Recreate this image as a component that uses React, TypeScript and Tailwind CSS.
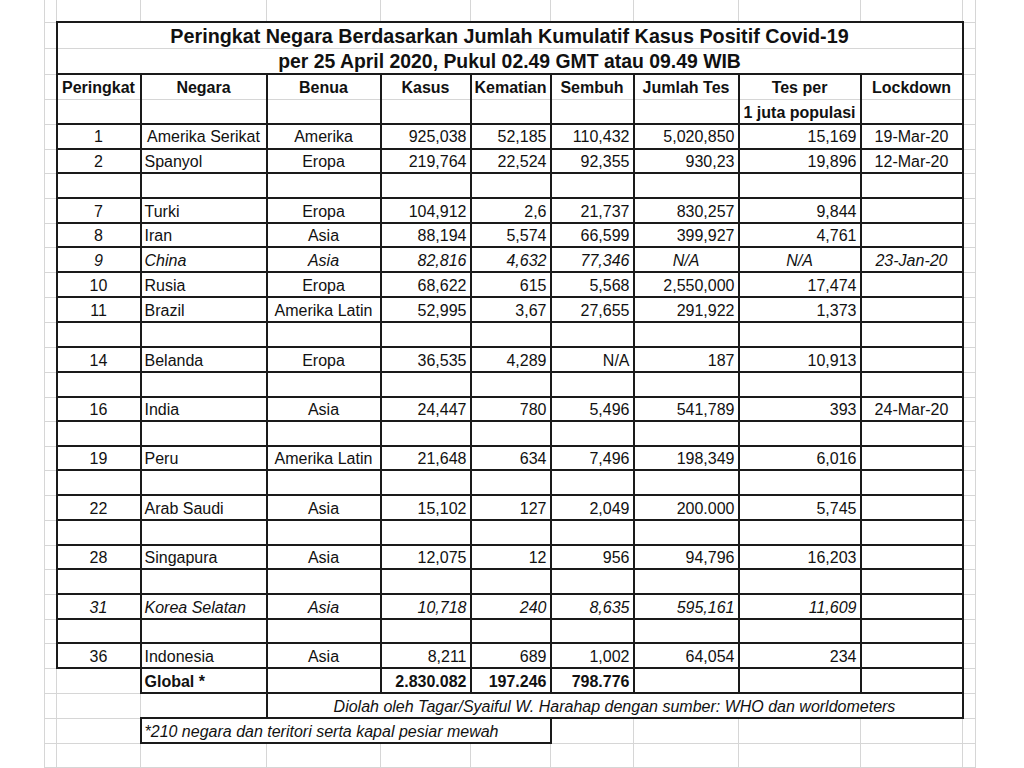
import React from 'react';

type C = {
  t?: string;
  s?: number;
  a?: 'l' | 'c' | 'r';
  b?: boolean;
  i?: boolean;
  T?: boolean;
  R?: boolean;
  B?: boolean;
  L?: boolean;
  pb?: string;
  sz?: string;
};

type Row = { h: number; cells: C[]; top?: boolean };

const widths = [12, 84, 126, 114, 90, 80, 83, 105, 122, 102, 13];

const hCls: Record<number, string> = {
  22: 'h-[22px]',
  24: 'h-[24px]',
  25: 'h-[25px]',
  26: 'h-[26px]',
};

const box = { T: true, R: true, B: true, L: true };

const dataAligns: ('l' | 'c' | 'r')[] = ['c', 'l', 'c', 'r', 'r', 'r', 'r', 'r', 'c'];

function dataRow(h: number, vals: string[], it = false, over: Record<number, 'l' | 'c' | 'r'> = {}, pb = 'pb-[1px]'): Row {
  return {
    h,
    cells: vals.map((v, k) => ({ t: v, a: over[k] ?? dataAligns[k], i: it, ...box, pb })),
  };
}

function emptyRow(h: number): Row {
  return { h, cells: Array.from({ length: 9 }, () => ({ ...box })) };
}

function grayRow(h: number, top = false): Row {
  return { h, top, cells: Array.from({ length: 9 }, () => ({})) };
}

const headers1 = ['Peringkat', 'Negara', 'Benua', 'Kasus', 'Kematian', 'Sembuh', 'Jumlah Tes', 'Tes per', 'Lockdown'];
const headers2 = ['', '', '', '', '', '', '', '1 juta populasi', ''];

const rows: Row[] = [
  grayRow(22, true),
  {
    h: 26,
    cells: [
      {
        t: 'Peringkat Negara Berdasarkan Jumlah Kumulatif Kasus Positif Covid-19',
        s: 9,
        a: 'c',
        b: true,
        T: true,
        L: true,
        R: true,
        pb: 'pb-[1px]',
        sz: 'text-[19.75px] leading-[22px]',
      },
    ],
  },
  {
    h: 26,
    cells: [
      {
        t: 'per 25 April 2020, Pukul 02.49 GMT atau 09.49 WIB',
        s: 9,
        a: 'c',
        b: true,
        B: true,
        L: true,
        R: true,
        pb: 'pb-[1px]',
        sz: 'text-[19.4px] leading-[22px]',
      },
    ],
  },
  { h: 25, cells: headers1.map((t) => ({ t, a: 'c', b: true, T: true, L: true, R: true, pb: 'pb-[2px]' })) },
  { h: 25, cells: headers2.map((t) => ({ t, a: 'c', b: true, B: true, L: true, R: true, pb: 'pb-[1px]' })) },
  dataRow(25, ['1', 'Amerika Serikat', 'Amerika', '925,038', '52,185', '110,432', '5,020,850', '15,169', '19-Mar-20'], false, { 1: 'c' }, 'pb-[2px]'),
  dataRow(24, ['2', 'Spanyol', 'Eropa', '219,764', '22,524', '92,355', '930,23', '19,896', '12-Mar-20']),
  emptyRow(25),
  dataRow(25, ['7', 'Turki', 'Eropa', '104,912', '2,6', '21,737', '830,257', '9,844', '']),
  dataRow(24, ['8', 'Iran', 'Asia', '88,194', '5,574', '66,599', '399,927', '4,761', '']),
  dataRow(25, ['9', 'China', 'Asia', '82,816', '4,632', '77,346', 'N/A', 'N/A', '23-Jan-20'], true, { 6: 'c', 7: 'c' }),
  dataRow(25, ['10', 'Rusia', 'Eropa', '68,622', '615', '5,568', '2,550,000', '17,474', '']),
  dataRow(25, ['11', 'Brazil', 'Amerika Latin', '52,995', '3,67', '27,655', '291,922', '1,373', '']),
  emptyRow(25),
  dataRow(25, ['14', 'Belanda', 'Eropa', '36,535', '4,289', 'N/A', '187', '10,913', '']),
  emptyRow(25),
  dataRow(24, ['16', 'India', 'Asia', '24,447', '780', '5,496', '541,789', '393', '24-Mar-20']),
  emptyRow(25),
  dataRow(24, ['19', 'Peru', 'Amerika Latin', '21,648', '634', '7,496', '198,349', '6,016', '']),
  emptyRow(25),
  dataRow(25, ['22', 'Arab Saudi', 'Asia', '15,102', '127', '2,049', '200.000', '5,745', '']),
  emptyRow(25),
  dataRow(24, ['28', 'Singapura', 'Asia', '12,075', '12', '956', '94,796', '16,203', '']),
  emptyRow(25),
  dataRow(25, ['31', 'Korea Selatan', 'Asia', '10,718', '240', '8,635', '595,161', '11,609', ''], true),
  emptyRow(24),
  dataRow(25, ['36', 'Indonesia', 'Asia', '8,211', '689', '1,002', '64,054', '234', '']),
  {
    h: 25,
    cells: [
      { T: true },
      { t: 'Global *', a: 'l', b: true, ...box, pb: 'pb-[1px]' },
      { ...box },
      { t: '2.830.082', a: 'r', b: true, ...box, pb: 'pb-[1px]' },
      { t: '197.246', a: 'r', b: true, ...box, pb: 'pb-[1px]' },
      { t: '798.776', a: 'r', b: true, ...box, pb: 'pb-[1px]' },
      { ...box },
      { ...box },
      { ...box },
    ],
  },
  {
    h: 25,
    cells: [
      {},
      { T: true, B: true },
      {
        t: 'Diolah oleh Tagar/Syaiful W. Harahap dengan sumber: WHO dan worldometers',
        s: 7,
        a: 'c',
        i: true,
        ...box,
        pb: 'pb-[1px]',
        sz: 'text-[16px] leading-[18px]',
      },
    ],
  },
  {
    h: 25,
    cells: [
      {},
      { t: '*210 negara dan teritori serta kapal pesiar mewah', s: 4, a: 'l', i: true, ...box, pb: 'pb-[1px]' },
      {},
      {},
      {},
      {},
    ],
  },
  grayRow(24),
];

function cellClass(c: C, top: boolean) {
  const k = [
    'border border-[#d6d6d6] p-0 px-[3px] align-bottom whitespace-nowrap overflow-visible',
    c.sz ?? 'text-[16px] leading-[18px]',
    c.pb ?? 'pb-[3px]',
    c.a === 'c' ? 'text-center' : c.a === 'r' ? 'text-right' : 'text-left',
    c.b ? 'font-bold' : 'font-normal',
    c.i ? 'italic' : '',
    c.T ? 'border-t-2 border-t-[#1a1a1a]' : '',
    c.R ? 'border-r-2 border-r-[#1a1a1a]' : '',
    c.B ? 'border-b-2 border-b-[#1a1a1a]' : '',
    c.L ? 'border-l-2 border-l-[#1a1a1a]' : '',
    top ? 'border-t-0' : '',
  ];
  return k.join(' ');
}

export default function App() {
  return (
    <div className="w-[1024px] h-[768px] overflow-hidden bg-white text-[#111] font-['Liberation_Sans',Arial,sans-serif]">
      <div className="pl-[44px]">
        <table className="table-fixed border-collapse w-[931px]">
          <colgroup>
            {widths.map((w, k) => (
              <col key={k} style={{ width: w }} />
            ))}
          </colgroup>
          <tbody>
            {rows.map((r, ri) => (
              <tr key={ri} className={hCls[r.h]}>
                <td className={cellClass({}, !!r.top)} />
                {r.cells.map((c, ci) => (
                  <td key={ci} colSpan={c.s} className={cellClass(c, !!r.top)}>
                    {c.t}
                  </td>
                ))}
                <td className={cellClass({}, !!r.top)} />
              </tr>
            ))}
          </tbody>
        </table>
      </div>
    </div>
  );
}
